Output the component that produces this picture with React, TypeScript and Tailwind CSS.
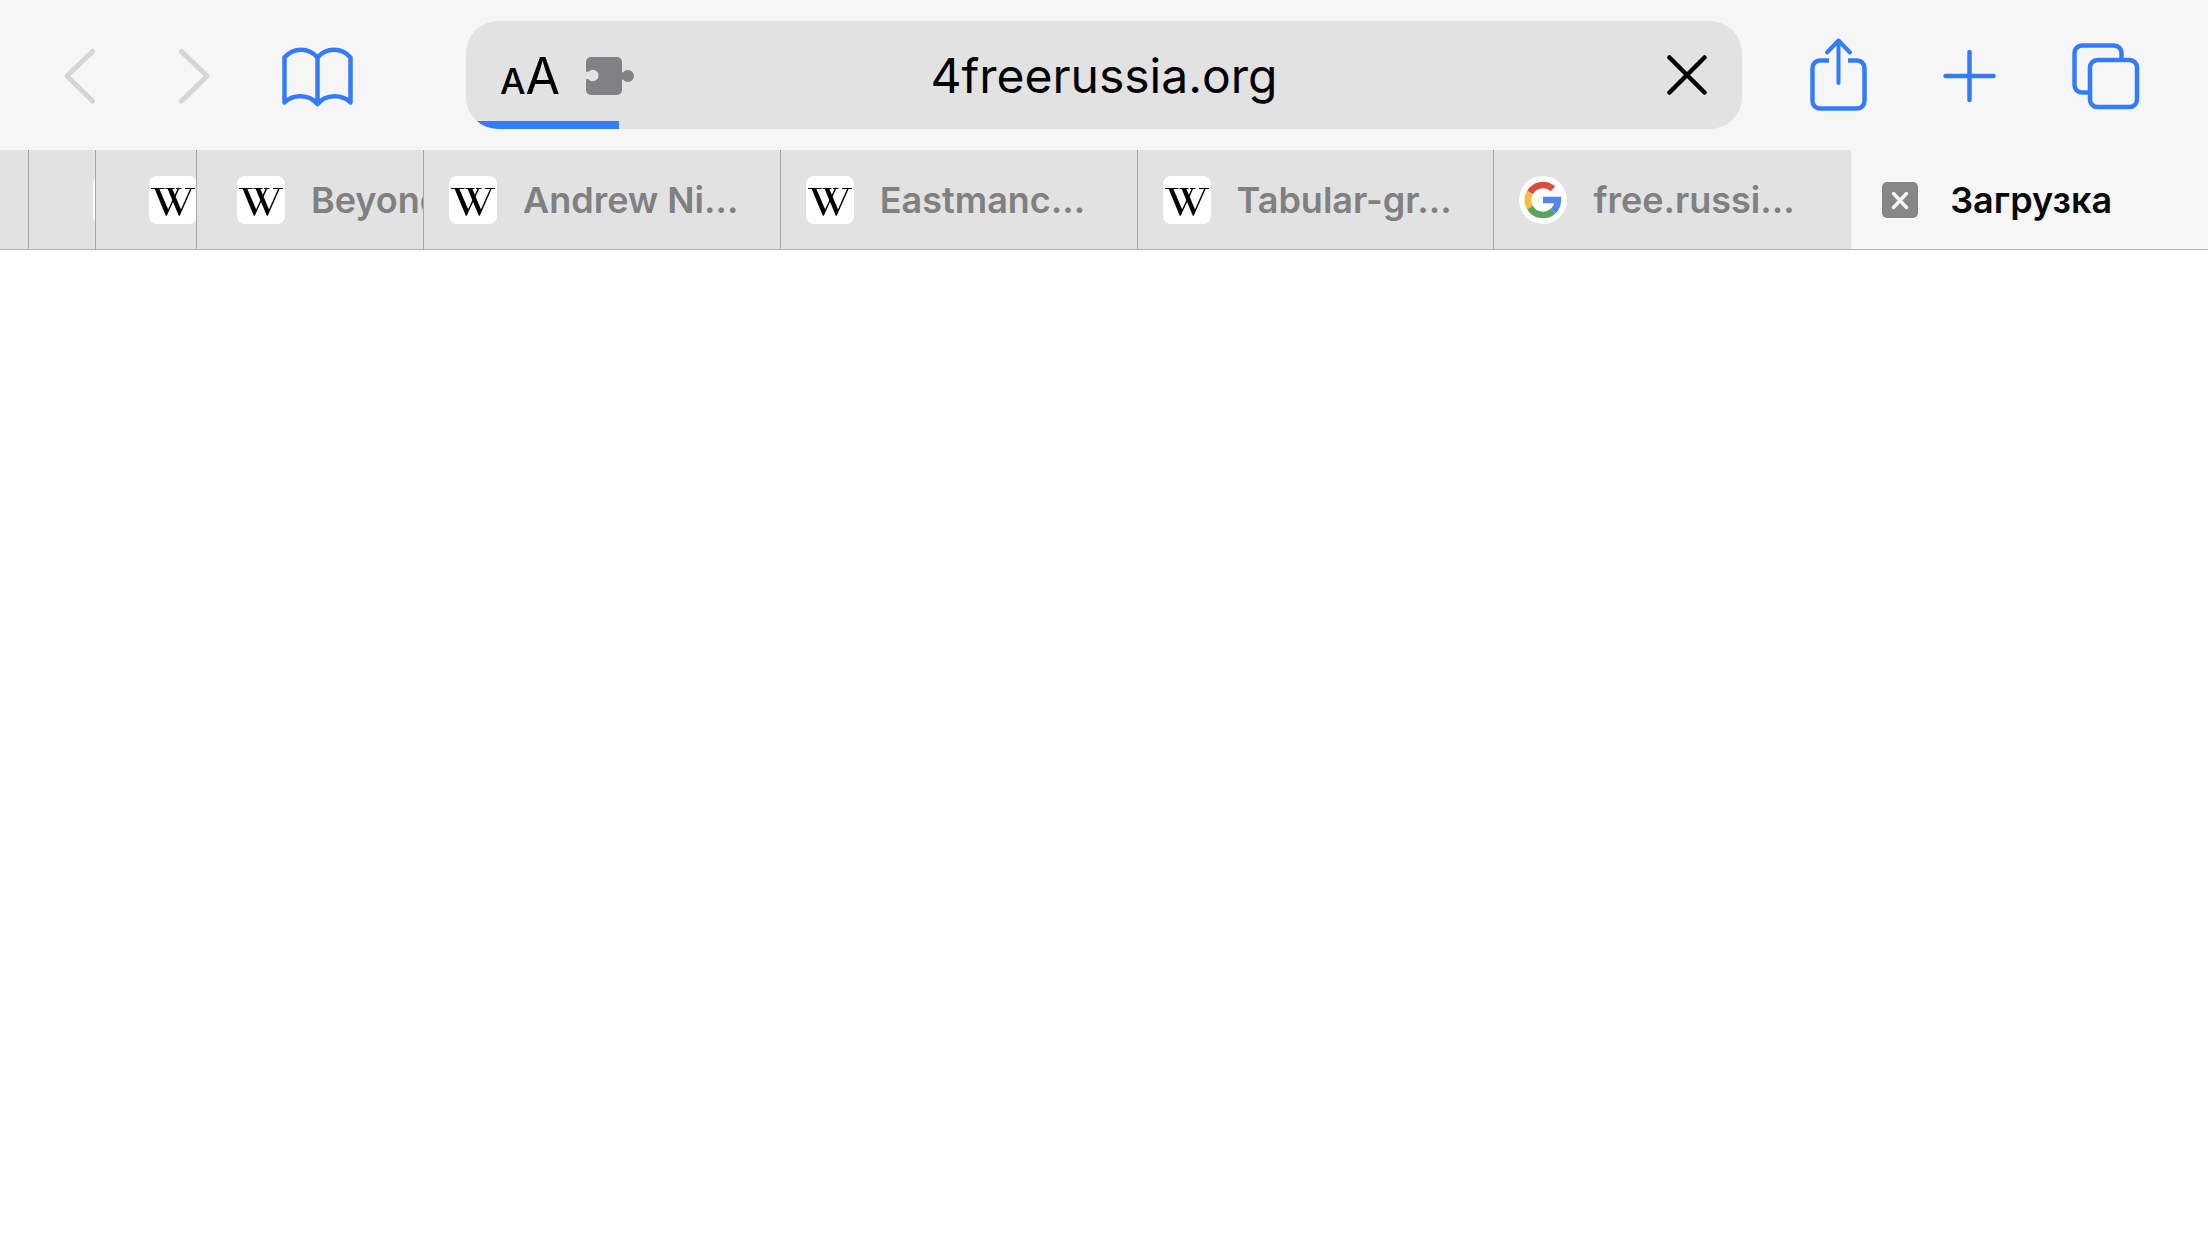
import React from "react";
import clsx from "clsx";

interface Tab {
    id: number;
    title: string;
    icon: "wikipedia" | "google" | "close" | "none";
    // widths of the collapsed tabs on the left edge of the strip
    className?: string;
    active?: boolean;
}

const tabs: Tab[] = [
    { id: 1, title: "", icon: "none", className: "w-[29px] shrink-0 border-[#a6a6a6]" },
    { id: 2, title: "", icon: "wikipedia", className: "w-[67px] shrink-0 border-[#a6a6a6] pl-16" },
    { id: 3, title: "", icon: "wikipedia", className: "w-[101px] shrink-0 border-[#a6a6a6] pl-[53px]" },
    { id: 4, title: "Beyond", icon: "wikipedia", className: "w-[227px] shrink-0 border-[#a6a6a6] pl-10" },
    { id: 5, title: "Andrew Ni...", icon: "wikipedia", className: "flex-1 border-[#a6a6a6] pl-[25px]" },
    { id: 6, title: "Eastmanc...", icon: "wikipedia", className: "flex-1 border-[#a6a6a6] pl-[25px]" },
    { id: 7, title: "Tabular-gr...", icon: "wikipedia", className: "flex-1 border-[#a6a6a6] pl-[25px]" },
    { id: 8, title: "free.russi...", icon: "google", className: "flex-1 border-[#e2e2e2] pl-[25px]" },
    { id: 9, title: "Загрузка", icon: "close", className: "flex-1 border-transparent pl-[25px]", active: true },
];

const WikipediaIcon = () => (
    <svg className="h-12 w-12 shrink-0" viewBox="0 0 48 48" aria-hidden="true">
        <rect width="48" height="48" rx="8" fill="#fff" />
        <path d="M5.500 12.500H10.200L19.200 33.500L17.800 39.800H16.800Z" />
        <path d="M18.500 12.500H23.200L32 33.500L30.800 39.800H29.800Z" />
        <path d="M2 12.500H15.500M16.500 12.500H25.500M27 12.500H32.500M36 12.500H46" stroke="#000" strokeWidth="1.200" />
        <path d="M17.500 38.500L29.300 13M30.500 38.500L41.800 13" stroke="#000" strokeWidth="1.500" />
    </svg>
);

const GoogleIcon = () => (
    <svg className="h-12 w-12 shrink-0" viewBox="0 0 48 48" fill="none" strokeWidth="6.600" aria-hidden="true">
        <circle cx="24" cy="24" r="24" fill="#fff" />
        <path d="M11 16.500A15 15 0 0 1 34 12.800" stroke="#d9503f" />
        <path d="M11 31.500A15 15 0 0 1 11 16.500" stroke="#f2bd42" />
        <path d="M34.200 35A15 15 0 0 1 11 31.500" stroke="#58a55c" />
        <path d="M24 24H38.800A15 15 0 0 1 34.200 35" stroke="#5085ed" />
    </svg>
);

const CloseTabIcon = () => (
    <svg className="h-9 w-9" viewBox="0 0 36 36" aria-hidden="true">
        <rect width="36" height="36" rx="5" fill="#868686" />
        <path d="M11.500 11.500l13 14m0-14l-13 14" stroke="#f6f6f6" strokeWidth="3.500" strokeLinecap="round" />
    </svg>
);

interface ToolButtonProps {
    label: string;
    className?: string;
    viewBox: string;
    iconClassName: string;
    disabled?: boolean;
    children: React.ReactNode;
}

const ToolButton: React.FC<ToolButtonProps> = ({ label, className, viewBox, iconClassName, disabled = false, children }) => {
    return (
        <button aria-label={label} disabled={disabled} className={clsx("shrink-0", disabled ? "text-[#d5d5d5]" : "text-[#347bf7]", className)}>
            <svg
                className={clsx("overflow-visible", iconClassName)}
                viewBox={viewBox}
                fill="none"
                stroke="currentColor"
                strokeWidth={disabled ? 5 : 4.5}
                strokeLinecap="round"
                strokeLinejoin="round"
                aria-hidden="true"
            >
                {children}
            </svg>
        </button>
    );
};

const Toolbar = () => {
    return (
        <header className="flex h-[150px] items-center pl-16 pr-[68px]">
            <ToolButton label="Назад" disabled viewBox="0 -1 32 56" iconClassName="h-14 w-8">
                <path d="M28.500 3.500L3 28l25.500 25" />
            </ToolButton>
            <ToolButton label="Вперёд" disabled className="ml-[82px]" viewBox="0 -1 32 56" iconClassName="h-14 w-8">
                <path d="M3.500 3.500L29 28L3.500 53" />
            </ToolButton>
            <ToolButton label="Закладки" className="ml-[72px]" viewBox="0 -4 72 64" iconClassName="h-16 w-18">
                <path d="M35.500 10.500C27 0 11 0 2.500 10.500V55.500C11 47 27 47 35.500 57C44 47 60 47 68.500 55.500V10.500C60 0 44 0 35.500 10.500V57" />
            </ToolButton>

            <form className="relative ml-28 mr-[68px] flex h-27 flex-1 items-center overflow-hidden rounded-[32px] bg-[#e2e2e2] pl-[34px] pr-[35px]">
                <button type="button" aria-label="Размер текста" className="flex items-baseline pt-0.5 leading-none text-black">
                    <span className="text-[36px] font-medium">A</span>
                    <span className="text-[50px]">A</span>
                </button>
                <button type="button" aria-label="Расширения" className="ml-[26px] pt-0.5">
                    <svg className="h-10 w-12" viewBox="0 0 48 40" fill="#818085" aria-hidden="true">
                        <path d="M5 1H31a5 5 0 0 1 5 5V15.500c0 1 .8 1.300 1.500.5a6 6 0 1 1 0 8c-.7-.8-1.500-.5-1.500.5V34a5 5 0 0 1-5 5H5a5 5 0 0 1-5-5V24.500c0-1.500 1.500-2.200 3-.8a5.700 5.700 0 1 0 0-8.400c-1.500 1.400-3 .7-3-.8V6a5 5 0 0 1 5-5z" />
                    </svg>
                </button>
                <input
                    type="text"
                    aria-label="Адрес"
                    defaultValue="4freerussia.org"
                    className="absolute inset-y-0 left-1/2 w-1/2 -translate-x-1/2 bg-transparent pt-0.5 text-center text-[48px] text-black outline-none"
                />
                <button type="button" aria-label="Остановить" className="ml-auto text-black">
                    <svg className="h-10 w-10" viewBox="0 0 40 40" stroke="currentColor" strokeWidth="4.500" strokeLinecap="round" aria-hidden="true">
                        <path d="M2.500 2.500l35 35m0-35l-35 35" />
                    </svg>
                </button>
                <div className="absolute bottom-0 left-0 h-2 w-[12%] bg-[#347bf7]" />
            </form>

            <ToolButton label="Поделиться" viewBox="0 0 58 74" iconClassName="h-[74px] w-[58px]">
                <path d="M19 22.500H10a7.500 7.500 0 0 0-7.500 7.500V63a7.500 7.500 0 0 0 7.500 7.500H47a7.500 7.500 0 0 0 7.500-7.500V30a7.500 7.500 0 0 0-7.500-7.500H38" strokeLinecap="butt" />
                <path d="M28.500 45V3.500M17 14.500L28.500 2.500L40 14.500" strokeWidth="4" />
            </ToolButton>
            <ToolButton label="Новая вкладка" className="ml-[75px]" viewBox="0 -1 54 54" iconClassName="h-[54px] w-[54px]">
                <path d="M26.500 3V51M2.500 27H50.500" />
            </ToolButton>
            <ToolButton label="Все вкладки" className="ml-[75px]" viewBox="0 -1 68 68" iconClassName="h-17 w-17">
                <rect x="18" y="18" width="47" height="47" rx="7.500" />
                <path d="M49.500 17V11a7.500 7.500 0 0 0-7.500-7.500H10A7.500 7.500 0 0 0 2.500 11V43a7.500 7.500 0 0 0 7.500 7.500H18" strokeLinecap="butt" />
            </ToolButton>
        </header>
    );
};

const TabItem: React.FC<{ tab: Tab }> = ({ tab }) => {
    return (
        <li
            className={clsx(
                "flex min-w-0 items-center overflow-hidden border-r",
                tab.active ? "text-[#0a0a0a]" : "bg-[#e2e2e2] text-[#808080]",
                tab.className
            )}
        >
            {tab.icon === "wikipedia" && <WikipediaIcon />}
            {tab.icon === "google" && <GoogleIcon />}
            {tab.icon === "close" && (
                <button aria-label="Закрыть вкладку" className="ml-1.5 mr-1.5 shrink-0">
                    <CloseTabIcon />
                </button>
            )}
            {tab.title && (
                <a href="#" className="ml-[26px] whitespace-nowrap text-[36px] font-semibold leading-12">
                    {tab.title}
                </a>
            )}
        </li>
    );
};

export default function App() {
    return (
        <div className="min-h-screen bg-white font-['Inter',sans-serif]">
            <div className="border-b border-[#b0b0b0] bg-[#f6f6f6]">
                <Toolbar />
                <nav aria-label="Вкладки">
                    <ul className="flex h-[99px]">
                        {tabs.map((tab) => (
                            <TabItem key={tab.id} tab={tab} />
                        ))}
                    </ul>
                </nav>
            </div>
            <main />
        </div>
    );
}
